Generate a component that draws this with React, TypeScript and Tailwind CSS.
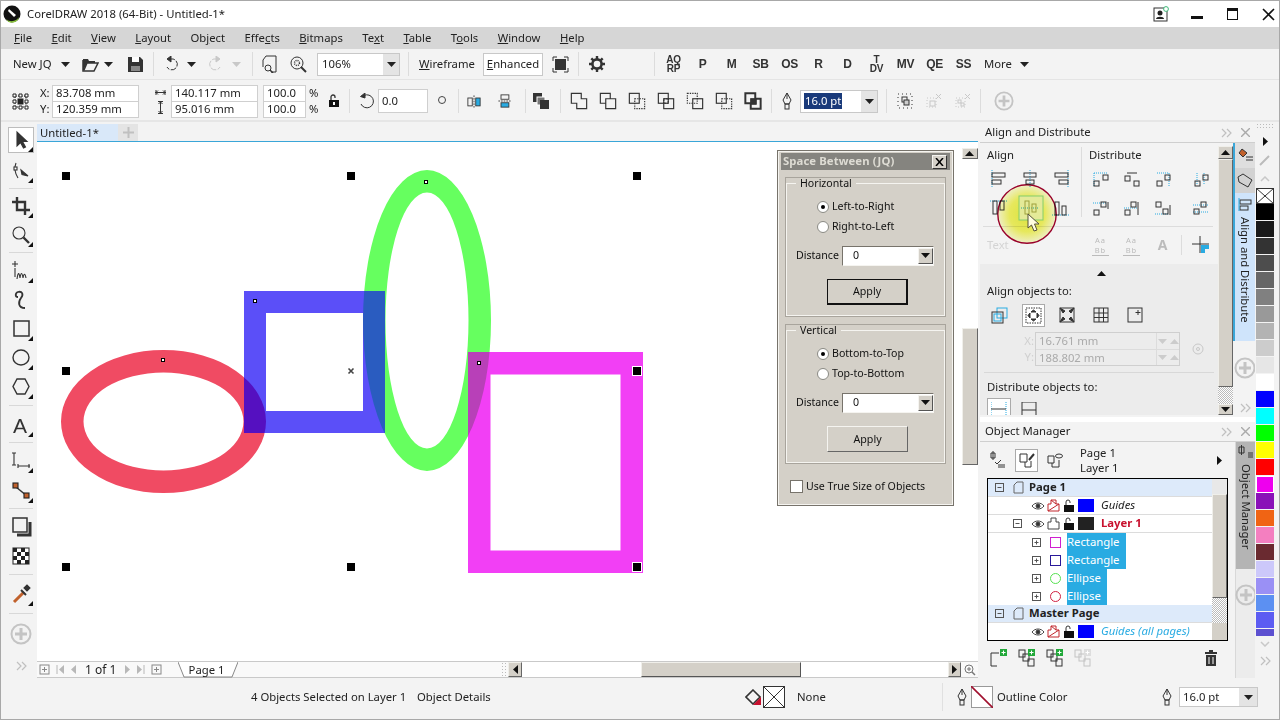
import type { ReactNode } from "react";

const ink = "#333";

function Ic({ w = 18, h = 18, vb, children, sw = 1 }: { w?: number; h?: number; vb?: string; children: ReactNode; sw?: number }) {
  return (
    <svg width={w} height={h} viewBox={vb ?? `0 0 ${w} ${h}`} fill="none" stroke={ink} strokeWidth={sw} className="shrink-0">
      {children}
    </svg>
  );
}

function Down({ c = "#222" }: { c?: string }) {
  return (
    <svg width="9" height="5" viewBox="0 0 9 5" className="shrink-0">
      <path d="M0 0H9L4.5 5Z" fill={c} />
    </svg>
  );
}

function VSep() {
  return <div className="w-px h-[24px] bg-[#dcdcdc] shrink-0" />;
}

function Plus({ size = 22 }: { size?: number }) {
  return (
    <svg width={size} height={size} viewBox="0 0 22 22" fill="none" stroke="#c4c4c4" strokeWidth="2" className="shrink-0">
      <circle cx="11" cy="11" r="9.5" />
      <path d="M11 5V17M5 11H17" strokeWidth="3" />
    </svg>
  );
}

function Chevrons({ c = "#c0c0c0" }: { c?: string }) {
  return (
    <svg width="11" height="10" viewBox="0 0 11 10" fill="none" stroke={c} strokeWidth="1.2" className="shrink-0">
      <path d="M1 1L5 5L1 9M6 1L10 5L6 9" />
    </svg>
  );
}

function Pen() {
  return (
    <svg width="10" height="18" viewBox="0 0 10 18" fill="none" stroke="#333" className="shrink-0">
      <path d="M5 1L9 8L7 12H3L1 8Z" />
      <path d="M5 1V7" />
      <rect x="3" y="12" width="4" height="5" />
    </svg>
  );
}

function Title() {
  return (
    <div className="h-[26px] flex items-center bg-white shrink-0">
      <svg width="18" height="18" viewBox="0 0 18 18" className="ml-[2px] shrink-0">
        <circle cx="9" cy="9" r="8.5" fill="#111" />
        <path d="M3 14A8.5 8.5 0 0 0 16 12A7 7 0 0 1 3 14Z" fill="#8dc63f" />
        <path d="M6 4L13 10L11 12L5 6Z" fill="#fff" />
      </svg>
      <span className="ml-[6px] text-[11.3px] text-[#222]">CorelDRAW 2018 (64-Bit) - Untitled-1*</span>
      <div className="ml-auto flex items-center">
        <svg width="16" height="16" viewBox="0 0 16 16" fill="none" className="shrink-0">
          <rect x="1" y="2" width="13" height="13" stroke="#333" />
          <circle cx="7" cy="7" r="2.5" fill="#222" />
          <path d="M3 13C3 10 11 10 11 13Z" fill="#222" />
          <circle cx="13" cy="3" r="2.4" stroke="#3cb878" fill="#fff" />
        </svg>
        <div className="ml-[22px] w-[12px] h-[3px] bg-[#111] mt-[7px]" />
        <div className="ml-[24px] w-[11px] h-[12px] border border-[#111] border-t-[3px]" />
        <svg width="13" height="13" viewBox="0 0 13 13" stroke="#111" strokeWidth="1.6" className="ml-[24px] mr-[4px] shrink-0">
          <path d="M1 1L12 12M12 1L1 12" />
        </svg>
      </div>
    </div>
  );
}

function Menu() {
  const item = "text-[11.3px] text-[#222]";
  return (
    <div className="h-[22px] bg-[#d6d6d6] flex items-center pl-[13px] gap-[19.4px] shrink-0">
      <span className={item}><u>F</u>ile</span>
      <span className={item}><u>E</u>dit</span>
      <span className={item}><u>V</u>iew</span>
      <span className={item}><u>L</u>ayout</span>
      <span className={item}>Ob<u>j</u>ect</span>
      <span className={item}>Effe<u>c</u>ts</span>
      <span className={item}><u>B</u>itmaps</span>
      <span className={item}>Te<u>x</u>t</span>
      <span className={item}><u>T</u>able</span>
      <span className={item}>T<u>o</u>ols</span>
      <span className={item}><u>W</u>indow</span>
      <span className={item}><u>H</u>elp</span>
    </div>
  );
}

function Slot({ w = "w-[18px]", ml = "", children }: { w?: string; ml?: string; children: ReactNode }) {
  return <div className={`${w} ${ml} flex justify-center items-center shrink-0`}>{children}</div>;
}

function Letter({ children }: { children: ReactNode }) {
  return (
    <div className="w-[29px] shrink-0 text-center text-[12px] font-bold text-[#333] font-['Liberation_Sans',sans-serif] leading-[10px] tracking-[-0.3px]">
      {children}
    </div>
  );
}

function Toolbar() {
  return (
    <div className="h-[31px] bg-[#f3f3f3] flex items-center pl-[12px] text-[11.3px] text-[#222] shrink-0 border-b border-[#e4e4e4]">
      <span className="w-[44px] shrink-0">New JQ</span>
      <Slot w="w-[16px]"><Down /></Slot>
      <Slot ml="ml-[8px]">
        <svg width="17" height="16" viewBox="0 0 17 16"><path d="M1 4V15H12L16 7H5L2 14" fill="none" stroke="#333" strokeWidth="1.5" /><path d="M1 3H6L7 5H13V7H5L2 13H1Z" fill="#333" /></svg>
      </Slot>
      <Slot w="w-[12px]" ml="ml-[3px]"><Down /></Slot>
      <Slot ml="ml-[12px]">
        <svg width="15" height="16" viewBox="0 0 15 16"><path d="M0 1H12L15 4V16H0Z" fill="#333" /><rect x="4" y="1" width="7" height="5" fill="#fff" /><rect x="3" y="10" width="9" height="5" fill="#888" /></svg>
      </Slot>
      <div className="ml-[9px]"><VSep /></div>
      <Slot ml="ml-[9px]">
        <Ic w={16} h={16}><path d="M5 3H9A5.5 5.5 0 1 1 3 11" strokeDasharray="6 1.5" /><path d="M7 0L3 3L7 6Z" fill={ink} /></Ic>
      </Slot>
      <Slot w="w-[12px]" ml="ml-[4px]"><Down /></Slot>
      <Slot ml="ml-[9px]">
        <svg width="16" height="16" viewBox="0 0 16 16" fill="none" stroke="#c8c8c8"><path d="M11 3H7A5.5 5.5 0 1 0 13 11" strokeDasharray="6 1.5" /><path d="M9 0L13 3L9 6Z" fill="#c8c8c8" /></svg>
      </Slot>
      <Slot w="w-[12px]" ml="ml-[6px]"><Down c="#c8c8c8" /></Slot>
      <div className="ml-[10px]"><VSep /></div>
      <Slot ml="ml-[7px]">
        <Ic w={15} h={18}><path d="M4 1H14V17H9M4 1L1 5V12" /><circle cx="6" cy="13" r="3" /><path d="M8 15L11 18" strokeWidth="1.5" /></Ic>
      </Slot>
      <Slot ml="ml-[11px]">
        <Ic w={17} h={17}><circle cx="7" cy="7" r="6" /><circle cx="7" cy="7" r="2.5" strokeDasharray="1 1" strokeWidth="1.4" /><path d="M11 11L16 16" strokeWidth="2" /></Ic>
      </Slot>
      <div className="ml-[10px] w-[83px] h-[23px] flex border border-[#c8c8c8] bg-white shrink-0">
        <span className="flex-1 pl-[4px] leading-[20px]">106%</span>
        <div className="w-[16px] bg-[#e4e4e4] flex items-center justify-center"><Down /></div>
      </div>
      <div className="ml-[8px]"><VSep /></div>
      <span className="ml-[10px] w-[56px] shrink-0 whitespace-nowrap"><u>W</u>ireframe</span>
      <span className="ml-[8px] w-[60px] h-[23px] shrink-0 border border-[#c8c8c8] bg-white text-center leading-[20px]"><u>E</u>nhanced</span>
      <Slot ml="ml-[8px]">
        <Ic w={17} h={17}><path d="M1 5V1H5M12 1H16V5M16 12V16H12M5 16H1V12" /><rect x="3" y="3" width="11" height="11" fill="#333" stroke="none" /></Ic>
      </Slot>
      <div className="ml-[9px]"><VSep /></div>
      <Slot ml="ml-[9px]">
        <svg width="16" height="16" viewBox="0 0 16 16" fill="none" stroke="#333" strokeWidth="2.6">
          <circle cx="8" cy="8" r="4.6" />
          <path d="M8 0V3M8 13V16M0 8H3M13 8H16M2.3 2.3L4.4 4.4M11.6 11.6L13.7 13.7M2.3 13.7L4.4 11.6M11.6 4.4L13.7 2.3" strokeWidth="2.4" />
        </svg>
      </Slot>
      <div className="ml-[48px]"><VSep /></div>
      <div className="ml-[4px] flex items-center">
        <Letter><div className="text-[10px] leading-[9px]">AQ</div><div className="text-[10px] leading-[9px]">RP</div></Letter>
        <Letter>P</Letter>
        <Letter>M</Letter>
        <Letter>SB</Letter>
        <Letter>OS</Letter>
        <Letter>R</Letter>
        <Letter>D</Letter>
        <Letter><div className="text-[10px] leading-[9px]">T</div><div className="text-[10px] leading-[9px]">DV</div></Letter>
        <Letter>MV</Letter>
        <Letter>QE</Letter>
        <Letter>SS</Letter>
      </div>
      <span className="ml-[6px] w-[30px] shrink-0">More</span>
      <Slot w="w-[12px]" ml="ml-[4px]"><Down /></Slot>
    </div>
  );
}

function Field({ w, text, h = "h-[17px]", extra = "" }: { w: string; text: string; h?: string; extra?: string }) {
  return (
    <div className={`${w} ${h} ${extra} border border-[#cfcfcf] bg-white pl-[3px] flex items-center text-[11.3px] text-[#222] leading-none whitespace-nowrap`}>
      {text}
    </div>
  );
}

function Shape({ n }: { n: number }) {
  const a = <rect x="1.5" y="1.5" width="11" height="11" />;
  const b = <rect x="7.5" y="7.5" width="11" height="11" />;
  const da = <rect x="1.5" y="1.5" width="11" height="11" strokeDasharray="1.5 1.2" />;
  const db = <rect x="7.5" y="7.5" width="11" height="11" strokeDasharray="1.5 1.2" />;
  return (
    <svg width="18" height="18" viewBox="0 0 20 20" fill="none" stroke="#333" strokeWidth="1.3">
      {n === 0 && <path d="M1.5 1.5H12.5V7.5H18.5V18.5H7.5V12.5H1.5Z" />}
      {n === 1 && <path d="M1.5 1.5H12.5V7.5H7.5V12.5H1.5ZM7.5 7.5H18.5V18.5H7.5Z" />}
      {n === 2 && <>{a}{db}</>}
      {n === 3 && <>{a}{b}<rect x="7.5" y="7.5" width="5" height="5" strokeDasharray="1.5 1" /></>}
      {n === 4 && <>{da}{b}</>}
      {n === 5 && <>{a}{db}</>}
      {n === 6 && <><path d="M1.5 1.5H12.5V12.5H1.5Z M7.5 12.5V18.5H18.5V7.5H12.5" strokeWidth="2.2" /><rect x="7.5" y="7.5" width="6" height="6" fill="#333" /></>}
    </svg>
  );
}

function PropBar() {
  return (
    <div className="h-[42px] bg-[#f3f3f3] flex items-center pl-[11px] text-[11.3px] text-[#222] shrink-0 border-b-[2px] border-[#e6e6e6] pt-[2px]">
      <svg width="17" height="17" viewBox="0 0 17 17" fill="none" stroke="#222" className="shrink-0">
        <rect x="3" y="3" width="11" height="11" strokeDasharray="1.5 1.5" />
        <rect x="6" y="6" width="5" height="5" fill="#222" />
        <path d="M1 1h3v3h-3zM7 1h3v3h-3zM13 1h3v3h-3zM1 7h3v3h-3zM13 7h3v3h-3zM1 13h3v3h-3zM7 13h3v3h-3zM13 13h3v3h-3z" fill="#fff" />
      </svg>
      <div className="ml-[11px] w-[12px] flex flex-col shrink-0 leading-[16px]"><span>X:</span><span>Y:</span></div>
      <div className="w-[87px] flex flex-col shrink-0">
        <Field w="w-full" text="83.708 mm" />
        <Field w="w-full" text="120.359 mm" extra="-mt-px" />
      </div>
      <div className="ml-[16px] w-[11px] flex flex-col items-center gap-[5px] shrink-0">
        <Ic w={11} h={7}><path d="M0 3.5H11M1 1V6M10 1V6M3 1.5L1 3.5L3 5.5M8 1.5L10 3.5L8 5.5" /></Ic>
        <Ic w={7} h={13}><path d="M3.5 0V13M1 0.5H6M1 12.5H6" /><path d="M1.5 3L3.5 1L5.5 3M1.5 10L3.5 12L5.5 10" /></Ic>
      </div>
      <div className="ml-[5px] w-[87px] flex flex-col shrink-0">
        <Field w="w-full" text="140.117 mm" />
        <Field w="w-full" text="95.016 mm" extra="-mt-px" />
      </div>
      <div className="ml-[5px] w-[43px] flex flex-col shrink-0">
        <Field w="w-full" text="100.0" />
        <Field w="w-full" text="100.0" extra="-mt-px" />
      </div>
      <div className="ml-[3px] w-[10px] flex flex-col shrink-0 leading-[16px]"><span>%</span><span>%</span></div>
      <Slot w="w-[12px]" ml="ml-[9px]">
        <svg width="10" height="14" viewBox="0 0 10 14"><path d="M2 6V3A2 2 0 0 1 6 3V4" fill="none" stroke="#333" strokeWidth="1.3" /><rect x="0" y="6" width="10" height="7" fill="#111" /><rect x="4" y="8" width="2" height="3" fill="#fff" /></svg>
      </Slot>
      <div className="ml-[9px]"><VSep /></div>
      <Slot w="w-[16px]" ml="ml-[9px]">
        <Ic w={16} h={16}><path d="M5 2.5A6.5 6.5 0 1 1 2 11" /><path d="M6 0L1.5 3.5L6 5Z" fill={ink} /></Ic>
      </Slot>
      <Field w="w-[50px] ml-[3px] shrink-0" h="h-[24px]" text="0.0" />
      <Slot w="w-[10px]" ml="ml-[9px]">
        <div className="w-[8px] h-[8px] rounded-full border border-[#444] -mt-[2px]" />
      </Slot>
      <div className="ml-[11px]"><VSep /></div>
      <Slot w="w-[30px]">
        <svg width="14" height="13" viewBox="0 0 16 14" fill="none" stroke="#333"><rect x="1" y="3" width="5" height="9" /><rect x="10" y="3" width="5" height="9" fill="#29abe2" stroke="#333" /><path d="M8 0V14" strokeDasharray="2 1" /></svg>
      </Slot>
      <Slot w="w-[30px]">
        <svg width="13" height="14" viewBox="0 0 14 16" fill="none" stroke="#333"><rect x="3" y="1" width="9" height="5" /><rect x="3" y="10" width="9" height="5" fill="#29abe2" stroke="#333" /><path d="M0 8H14" strokeDasharray="2 1" /></svg>
      </Slot>
      <div className="ml-[6px]"><VSep /></div>
      <Slot w="w-[30px]">
        <svg width="16" height="16" viewBox="0 0 16 16"><rect x="0" y="0" width="9" height="9" fill="#333" /><rect x="4" y="4" width="8" height="8" fill="#777" stroke="#fff" /><rect x="7" y="7" width="9" height="9" fill="#333" /></svg>
      </Slot>
      <div className="ml-[4px]"><VSep /></div>
      <div className="ml-[3px] flex items-center shrink-0">
        {[0, 1, 2, 3, 4, 5, 6].map((n) => (
          <Slot key={n} w="w-[29px]"><Shape n={n} /></Slot>
        ))}
      </div>
      <div className="ml-[4px]"><VSep /></div>
      <Slot w="w-[24px]" ml="ml-[3px]"><Pen /></Slot>
      <div className="ml-[1px] w-[78px] h-[23px] flex border border-[#c8c8c8] bg-white shrink-0">
        <div className="flex-1 pl-[3px] flex items-center">
          <span className="bg-[#1a3a7a] text-white px-px leading-[16px]">16.0 pt</span>
        </div>
        <div className="w-[16px] bg-[#e4e4e4] flex items-center justify-center"><Down /></div>
      </div>
      <div className="ml-[8px]"><VSep /></div>
      <Slot w="w-[29px]" ml="ml-[3px]">
        <svg width="16" height="16" viewBox="0 0 16 16" fill="none" stroke="#333"><rect x="1" y="1" width="14" height="14" strokeDasharray="1 3" /><rect x="5" y="4" width="5" height="5" /><rect x="7" y="7" width="5" height="5" fill="#ccc" /></svg>
      </Slot>
      <Slot w="w-[29px]">
        <svg width="16" height="16" viewBox="0 0 16 16" fill="none" stroke="#c8c8c8"><rect x="1" y="5" width="9" height="9" strokeDasharray="1 2" /><rect x="4" y="8" width="5" height="5" /><path d="M10 1L15 6M15 1L10 6" /></svg>
      </Slot>
      <Slot w="w-[29px]">
        <svg width="16" height="16" viewBox="0 0 16 16" fill="none" stroke="#c8c8c8"><rect x="1" y="5" width="9" height="9" strokeDasharray="1 2" /><rect x="3" y="7" width="3" height="3" /><rect x="6" y="10" width="3" height="3" /><path d="M10 1L15 6M15 1L10 6" /></svg>
      </Slot>
      <div className="ml-[3px]"><VSep /></div>
      <Slot w="w-[24px]" ml="ml-[11px]"><Plus size={20} /></Slot>
    </div>
  );
}

function Fly() {
  return <path d="M24 19V24H19Z" fill="#111" stroke="none" />;
}

function Tool({ children, active, fly = true }: { children: ReactNode; active?: boolean; fly?: boolean }) {
  return (
    <div className="h-[29px] flex items-center justify-center">
      <div className={`w-[24px] h-[24px] ${active ? "bg-white outline outline-[#bdbdbd]" : ""}`}>
        <svg width="24" height="24" viewBox="0 0 24 24" fill="none" stroke="#333" strokeWidth="1.1">
          {children}
          {fly && <Fly />}
        </svg>
      </div>
    </div>
  );
}

function ToolSep({ h }: { h: string }) {
  return (
    <div className={`${h} flex items-center justify-center`}>
      <div className="w-[24px] h-px bg-[#d8d8d8]" />
    </div>
  );
}

function Toolbox() {
  return (
    <div className="w-[36px] shrink-0 bg-[#f3f3f3] flex flex-col pt-[3px] pl-[4px] relative">
      <Tool active><path d="M8 4V18L11.5 14.5L14.5 20L16.5 19L13.5 13.5H18Z" fill="#333" /></Tool>
      <div className="h-[2px]" />
      <Tool><path d="M7 4Q4 11 9 19" /><rect x="5" y="8" width="3" height="3" fill="#fff" /><path d="M12 11L19 17L13 15.5Z" fill="#333" /></Tool>
      <ToolSep h="h-[6px]" />
      <Tool><path d="M8 3V16H21M3 8H16V21" strokeWidth="2.4" /></Tool>
      <Tool><circle cx="10" cy="10" r="6" /><path d="M14.5 14.5L20 20" strokeWidth="2.4" /></Tool>
      <ToolSep h="h-[7px]" />
      <Tool><path d="M6 2V8M3 5H9M6 9V18" /><path d="M8 20C9 13 10 13 11 19C12 13 13 13 14 19C15 14 16 14 17 19" /></Tool>
      <Tool fly={false}><path d="M16 20C9 20 9 14 12 10C15 6 13 3 9 4C6 5 6 9 9 9" strokeWidth="1.8" /></Tool>
      <Tool><rect x="5" y="4" width="15" height="15" strokeWidth="1.5" /></Tool>
      <Tool><ellipse cx="12" cy="11.5" rx="8" ry="7.5" strokeWidth="1.4" /></Tool>
      <Tool><path d="M8 4H16L20 11.5L16 19H8L4 11.5Z" strokeWidth="1.4" /></Tool>
      <ToolSep h="h-[9px]" />
      <Tool>
        <text x="4" y="20" fontSize="21" stroke="none" fill="#333" fontFamily="Liberation Sans, sans-serif">A</text>
      </Tool>
      <ToolSep h="h-[7px]" />
      <Tool><path d="M5 4V16M3 4H7M3 16H7M9 17H21" /><path d="M9 15L9 19M20 15L20 19" /></Tool>
      <div className="h-px" />
      <Tool><path d="M7 8L18 17" strokeWidth="1.5" /><rect x="4" y="4" width="5" height="5" fill="#c1612c" stroke="#222" /><rect x="15" y="14" width="5" height="5" fill="#c1612c" stroke="#222" /></Tool>
      <ToolSep h="h-[7px]" />
      <Tool fly={false}><rect x="4" y="3" width="14" height="14" strokeWidth="1.5" /><path d="M21 7V20H8" strokeWidth="3" /></Tool>
      <Tool fly={false}>
        <rect x="4" y="4" width="16" height="16" fill="#fff" stroke="#333" />
        <path d="M4 4h4v4h-4zM12 4h4v4h-4zM8 8h4v4h-4zM16 8h4v4h-4zM4 12h4v4h-4zM12 12h4v4h-4zM8 16h4v4h-4zM16 16h4v4h-4z" fill="#222" stroke="none" />
      </Tool>
      <ToolSep h="h-[9px]" />
      <Tool><path d="M5 20L15 10" stroke="#c1612c" strokeWidth="3" /><path d="M12 8L17 13" strokeWidth="2" /><path d="M15 6L18 3L21 6L18 9Z" fill="#333" /></Tool>
      <ToolSep h="h-[11px]" />
      <div className="h-[29px] flex items-center justify-center"><Plus /></div>
      <div className="absolute bottom-[7px] left-[15px]"><Chevrons /></div>
    </div>
  );
}

const ring = (cx: number, cy: number, rx: number, ry: number, t: number) => {
  const e = (a: number, b: number) => `M${cx - a} ${cy}a${a} ${b} 0 1 0 ${2 * a} 0a${a} ${b} 0 1 0 ${-2 * a} 0Z`;
  return e(rx, ry) + e(rx - t, ry - t);
};
const band = (x0: number, y0: number, x1: number, y1: number, t: number) =>
  `M${x0} ${y0}H${x1}V${y1}H${x0}ZM${x0 + t} ${y0 + t}H${x1 - t}V${y1 - t}H${x0 + t}Z`;

const redRing = ring(163.5, 421.5, 102.5, 71.5, 22.5);
const greenRing = ring(427, 320.5, 64, 150.5, 22.5);
const blueBand = band(244, 291, 385, 433, 22);
const pinkBand = band(468, 352, 643, 573, 22.5);

function Drawing() {
  const handles: [number, number][] = [[66, 176], [351, 176], [637, 176], [66, 371], [66, 567], [351, 567]];
  const nodes: [number, number][] = [[163, 360], [255, 301], [426, 182], [479, 363]];
  return (
    <svg width="924" height="518" viewBox="37 142 924 518" className="block">
      <defs>
        <clipPath id="clip-red"><path d={redRing} clipRule="evenodd" /></clipPath>
        <clipPath id="clip-green"><path d={greenRing} clipRule="evenodd" /></clipPath>
      </defs>
      <path d={redRing} fill="#f04b63" fillRule="evenodd" />
      <path d={greenRing} fill="#66ff5f" fillRule="evenodd" />
      <path d={blueBand} fill="#5b4ff8" fillRule="evenodd" />
      <path d={pinkBand} fill="#f23ff5" fillRule="evenodd" />
      <path d={blueBand} fill="#5510c0" fillRule="evenodd" clipPath="url(#clip-red)" />
      <path d={blueBand} fill="#2a5cc0" fillRule="evenodd" clipPath="url(#clip-green)" />
      <path d={pinkBand} fill="#b840b8" fillRule="evenodd" clipPath="url(#clip-green)" />
      {handles.map(([x, y]) => (
        <rect key={`${x}-${y}`} x={x - 4} y={y - 4} width="8" height="8" fill="#000" />
      ))}
      <rect x="632.5" y="366.5" width="9" height="9" fill="#000" stroke="#fff" />
      <rect x="632.5" y="562.5" width="9" height="9" fill="#000" stroke="#fff" />
      {nodes.map(([x, y]) => (
        <rect key={`${x}-${y}`} x={x - 1.5} y={y - 1.5} width="3" height="3" fill="#fff" stroke="#000" />
      ))}
      <path d="M348.5 368.5L353.5 373.5M353.5 368.5L348.5 373.5" stroke="#444" strokeWidth="1.6" />
    </svg>
  );
}

function Radio({ on, label }: { on?: boolean; label: string }) {
  return (
    <div className="h-[20px] flex items-center pl-[30px]">
      <div className="w-[12px] h-[12px] rounded-full bg-white border border-[#8a8a84] flex items-center justify-center shrink-0">
        {on && <div className="w-[4px] h-[4px] rounded-full bg-black" />}
      </div>
      <span className="ml-[3px]">{label}</span>
    </div>
  );
}

function Group({ title, a, b, def }: { title: string; a: string; b: string; def?: boolean }) {
  return (
    <fieldset className="border border-[#f5f4f0] outline outline-[#a8a49c] mx-[7px] h-[138px] px-0">
      <legend className="ml-[9px] px-[4px] leading-none">{title}</legend>
      <div className="mt-[8px]">
        <Radio on label={a} />
        <Radio label={b} />
      </div>
      <div className="mt-[9px] flex items-center pl-[9px]">
        <span className="w-[46px]">Distance</span>
        <div className="w-[92px] h-[20px] bg-white border border-t-[#77736b] border-l-[#77736b] border-r-[#f5f4f0] border-b-[#f5f4f0] flex items-center pl-[10px]">
          <span className="flex-1">0</span>
          <div className="w-[15px] h-[16px] bg-[#d4d0c8] border border-[#f5f4f0] border-r-[#555] border-b-[#555] flex items-center justify-center"><Down c="#111" /></div>
        </div>
      </div>
      <div className="mt-[13px] flex justify-center pl-[4px]">
        <button className={`w-[81px] h-[26px] bg-[#d4d0c8] border ${def ? "border-[#111] border-b-[2px] border-r-[2px]" : "border-[#f5f4f0] border-r-[#666] border-b-[#666]"} text-[10.7px]`}>
          Apply
        </button>
      </div>
    </fieldset>
  );
}

function SpaceDialog() {
  return (
    <div className="absolute left-[741px] top-[9px] w-[175px] h-[354px] bg-[#d4d0c8] border border-[#f5f4f0] outline outline-[#77736b] text-[10.6px] text-[#111] font-['Noto_Sans',sans-serif]">
      <div className="mx-[2px] mt-px h-[17px] bg-[#85847f] flex items-center pl-[2px]">
        <span className="font-bold text-[#dedcd4] text-[11.3px] tracking-[0.1px]">Space Between (JQ)</span>
        <div className="ml-auto mr-[3px] w-[15px] h-[14px] bg-[#d4d0c8] border border-[#f5f4f0] border-r-[#333] border-b-[#333] flex items-center justify-center">
          <svg width="9" height="8" viewBox="0 0 9 8" stroke="#000" strokeWidth="1.5"><path d="M1 0L8 8M8 0L1 8" /></svg>
        </div>
      </div>
      <div className="mt-[8px]">
        <Group title="Horizontal" a="Left-to-Right" b="Right-to-Left" def />
      </div>
      <div className="mt-[9px]">
        <Group title="Vertical" a="Bottom-to-Top" b="Top-to-Bottom" />
      </div>
      <div className="mt-[16px] ml-[11px] flex items-center">
        <div className="w-[13px] h-[13px] bg-white border border-[#77736b]" />
        <span className="ml-[3px]">Use True Size of Objects</span>
      </div>
    </div>
  );
}

function Btn({ children, cls = "w-[16px] h-[11px]" }: { children: ReactNode; cls?: string }) {
  return (
    <div className={`${cls} bg-[#d4d0c8] border border-[#f0efea] border-r-[#666] border-b-[#666] flex items-center justify-center shrink-0`}>
      {children}
    </div>
  );
}

function Arrow({ dir, c = "#111" }: { dir: "up" | "down" | "left" | "right"; c?: string }) {
  const d = { up: "M0 5H9L4.5 0Z", down: "M0 0H9L4.5 5Z", left: "M5 0V9L0 4.5Z", right: "M0 0V9L5 4.5Z" }[dir];
  const box = dir === "up" || dir === "down" ? "0 0 9 5" : "0 0 5 9";
  const w = dir === "up" || dir === "down" ? 9 : 5;
  const h = dir === "up" || dir === "down" ? 5 : 9;
  return (
    <svg width={w} height={h} viewBox={box} className="shrink-0">
      <path d={d} fill={c} />
    </svg>
  );
}

function NavBar() {
  const g = "#b8b8b8";
  return (
    <div className="h-[17px] flex items-center bg-[#f9f9f9] border-t border-b border-[#c9c9c9] shrink-0 text-[12px] text-[#222]">
      <div className="w-[139px] flex items-center pl-[2px] shrink-0">
        <svg width="11" height="11" viewBox="0 0 11 11" fill="none" stroke="#888" className="shrink-0"><rect x="1" y="1" width="9" height="9" /><path d="M5.5 3V8M3 5.5H8" /></svg>
        <svg width="8" height="9" viewBox="0 0 8 9" className="ml-[6px] shrink-0"><path d="M1 0V9" stroke={g} /><path d="M8 0V9L3 4.5Z" fill={g} /></svg>
        <div className="ml-[7px] flex"><Arrow dir="left" c={g} /></div>
        <span className="ml-[9px] w-[33px] whitespace-nowrap shrink-0">1 of 1</span>
        <div className="ml-[7px] flex"><Arrow dir="right" c={g} /></div>
        <svg width="8" height="9" viewBox="0 0 8 9" className="ml-[7px] shrink-0"><path d="M7 0V9" stroke={g} /><path d="M0 0V9L5 4.5Z" fill={g} /></svg>
        <svg width="11" height="11" viewBox="0 0 11 11" fill="none" stroke="#888" className="ml-[6px] shrink-0"><rect x="1" y="1" width="9" height="9" /><path d="M5.5 3V8M3 5.5H8" /></svg>
      </div>
      <div className="relative w-[60px] h-[15px] ml-[2px] pr-[3px] text-center text-[11.3px] shrink-0 leading-[15px]">
        <svg width="60" height="16" viewBox="0 0 60 16" className="absolute inset-0">
          <path d="M0 0L6 15H54L60 0" fill="#fff" stroke="#888" />
        </svg>
        <span className="relative">Page 1</span>
      </div>
      <div className="flex-1" />
      <div className="w-[6px] h-full mr-px bg-[radial-gradient(#bbb_1px,transparent_1px)] bg-[length:3px_3px]" />
      <Btn cls="w-[14px] h-[15px]"><Arrow dir="left" /></Btn>
      <div className="w-[119px] h-full bg-white shrink-0" />
      <div className="w-[160px] h-[15px] bg-[#d4d0c8] border border-[#f0efea] border-r-[#555] border-b-[#555] shrink-0" />
      <div className="w-[147px] h-full bg-white shrink-0" />
      <Btn cls="w-[13px] h-[15px]"><Arrow dir="right" /></Btn>
      <div className="w-[17px] flex justify-center shrink-0">
        <svg width="12" height="12" viewBox="0 0 12 12" fill="none" stroke="#777"><circle cx="5" cy="5" r="4" /><path d="M8 8L11 11" strokeWidth="1.5" /><path d="M3 5H7M5 3V7" /></svg>
      </div>
    </div>
  );
}

function Document() {
  return (
    <div className="flex-1 min-w-0 flex flex-col">
      <div className="h-[20px] flex items-end bg-[#f3f3f3] shrink-0 border-b border-[#3aa6d8]">
        <div className="w-[81px] h-[17px] bg-[#d9e8f9] text-[11.3px] text-[#222] pl-[3px] leading-[17px]">Untitled-1*</div>
        <div className="w-[20px] h-[17px] bg-[#e4e4e4] flex items-center justify-center">
          <svg width="11" height="11" viewBox="0 0 11 11" stroke="#c0c0c0" strokeWidth="2"><path d="M5.5 0V11M0 5.5H11" /></svg>
        </div>
      </div>
      <div className="flex-1 min-h-0 flex">
        <div className="relative w-[924px] bg-white overflow-hidden shrink-0">
          <Drawing />
          <SpaceDialog />
        </div>
        <div className="flex-1 bg-white flex flex-col items-center pt-[6px]">
          <Btn><Arrow dir="up" /></Btn>
          <div className="mt-[169px] w-[16px] h-[137px] bg-[#d4d0c8] border border-[#f0efea] border-r-[#666] border-b-[#666]" />
        </div>
      </div>
      <NavBar />
    </div>
  );
}

function Al({ children, dim }: { children: ReactNode; dim?: boolean }) {
  return (
    <div className="w-[31px] flex justify-center shrink-0">
      <svg width="18" height="18" viewBox="0 0 18 18" fill="none" stroke={dim ? "#a8a860" : "#333"}>{children}</svg>
    </div>
  );
}

const Dot = ({ d }: { d: string }) => <path d={d} stroke="#29abe2" strokeDasharray="1 1" />;

function AlignPanel() {
  return (
    <div className="flex-1 min-w-0 h-[272px] overflow-hidden relative text-[11.3px] text-[#222]">
      <div className="h-[121px] bg-[#f3f3f3] pl-[3px] pr-[5px]">
        <div className="flex h-[79px] pt-[4px]">
          <div className="w-[98px] shrink-0">
            <div className="h-[17px] pl-[4px] leading-[16px]">Align</div>
            <div className="flex h-[29px] items-center">
              <Al><Dot d="M2 0V18" /><rect x="2" y="3" width="13" height="4" /><rect x="2" y="10" width="9" height="4" /></Al>
              <Al><Dot d="M9 0V18" /><rect x="3" y="3" width="12" height="4" /><rect x="5" y="10" width="8" height="4" /></Al>
              <Al><Dot d="M16 0V18" /><rect x="3" y="3" width="13" height="4" /><rect x="7" y="10" width="9" height="4" /></Al>
            </div>
            <div className="flex h-[29px] items-center">
              <Al><Dot d="M0 2H18" /><rect x="3" y="2" width="4" height="13" /><rect x="10" y="2" width="4" height="9" /></Al>
              <Al dim><Dot d="M0 9H18" /><rect x="4" y="2" width="4" height="13" /><rect x="11" y="5" width="4" height="8" /></Al>
              <Al><Dot d="M0 16H18" /><rect x="3" y="3" width="4" height="13" /><rect x="10" y="7" width="4" height="9" /></Al>
            </div>
          </div>
          <div className="w-px h-[70px] bg-[#dcdcdc] shrink-0" />
          <div className="flex-1 pl-[3px]">
            <div className="h-[17px] pl-[4px] leading-[16px]">Distribute</div>
            <div className="flex h-[29px] items-center">
              <Al><Dot d="M2 3H15" /><path d="M2 3V16" stroke="#29abe2" strokeDasharray="1 1" /><rect x="2" y="11" width="5" height="5" /><rect x="11" y="5" width="5" height="5" /></Al>
              <Al><path d="M4 3H14" /><rect x="2" y="6" width="5" height="5" /><rect x="11" y="11" width="5" height="5" /></Al>
              <Al><Dot d="M3 3H15V16" /><rect x="3" y="11" width="5" height="5" /><rect x="11" y="5" width="5" height="5" /></Al>
              <div className="ml-[7px] shrink-0"><Al><path d="M5 3V14M12 3V14" strokeDasharray="1 1" stroke="#29abe2" /><rect x="3" y="11" width="5" height="5" /><rect x="11" y="5" width="5" height="5" /></Al></div>
            </div>
            <div className="flex h-[29px] items-center">
              <Al><Dot d="M1 4H15" /><rect x="2" y="11" width="5" height="5" /><rect x="9" y="3" width="5" height="5" /><path d="M16 3V10" /></Al>
              <Al><Dot d="M1 9H15" /><rect x="2" y="11" width="5" height="5" /><rect x="8" y="3" width="5" height="5" /><path d="M15 3V16" /></Al>
              <Al><Dot d="M1 15H15" /><rect x="2" y="3" width="5" height="5" /><rect x="9" y="10" width="5" height="5" /><path d="M16 6V16" /></Al>
              <div className="ml-[7px] shrink-0"><Al><Dot d="M1 6H16M1 13H16" /><rect x="2" y="10" width="5" height="5" /><rect x="9" y="3" width="5" height="5" /></Al></div>
            </div>
          </div>
        </div>
        <div className="mt-[4px] h-px bg-[#dcdcdc]" />
        <div className="mt-[5px] h-[26px] flex items-center">
          <span className="w-[98px] pl-[4px] text-[#d4d4d4] shrink-0">Text</span>
          <div className="pl-[4px] flex items-center">
            {["Aa", "Aa"].map((t, i) => (
              <div key={i} className="w-[31px] text-center text-[#bbb] text-[7.5px] leading-[10px] tracking-[1px]">
                <div>{t}</div>
                <div className="border-b border-[#bbb] mx-[7px]">Bb</div>
              </div>
            ))}
            <div className="w-[31px] text-center text-[#bbb] font-bold text-[14px] leading-none">A</div>
            <div className="w-px h-[20px] bg-[#dcdcdc] ml-[3px]" />
            <svg width="18" height="18" viewBox="0 0 18 18" className="ml-[10px] shrink-0">
              <path d="M0 8H17M8 0V17" stroke="#333" />
              <path d="M9 9H17V13H13V17H9Z" fill="#29abe2" />
            </svg>
          </div>
        </div>
      </div>
      <div className="h-[151px] bg-[#ececec]">
        <div className="h-[18px] flex items-center pl-[117px]"><Arrow dir="up" /></div>
        <div className="h-[18px] pl-[7px] leading-[18px]">Align objects to:</div>
        <div className="mt-[3px] h-[24px] flex items-center pl-[2px]">
          <div className="w-[34px] flex justify-center">
            <svg width="17" height="17" viewBox="0 0 17 17" fill="none"><rect x="6" y="1" width="10" height="10" stroke="#29abe2" /><rect x="1" y="5" width="11" height="11" stroke="#333" /><rect x="3" y="7" width="7" height="7" stroke="#29abe2" /></svg>
          </div>
          <div className="w-[34px] flex justify-center">
            <div className="w-[23px] h-[23px] bg-white border border-[#aaa] flex items-center justify-center">
              <svg width="17" height="17" viewBox="0 0 17 17" fill="none" stroke="#333"><rect x="1" y="1" width="15" height="15" strokeDasharray="1.5 1" /><path d="M6 5L8.5 3L11 5ZM6 12L8.5 14L11 12ZM5 6L3 8.5L5 11ZM12 6L14 8.5L12 11Z" fill="#333" /></svg>
            </div>
          </div>
          <div className="w-[34px] flex justify-center">
            <svg width="16" height="16" viewBox="0 0 16 16" fill="none" stroke="#333"><rect x="1" y="1" width="14" height="14" /><path d="M1 1L6 4L4 6ZM15 1L10 4L12 6ZM1 15L6 12L4 10ZM15 15L10 12L12 10Z" fill="#333" /></svg>
          </div>
          <div className="w-[34px] flex justify-center">
            <svg width="16" height="16" viewBox="0 0 16 16" fill="none" stroke="#333"><rect x="1" y="1" width="14" height="14" /><path d="M6 1V15M10.5 1V15M1 6H15M1 10.5H15" /></svg>
          </div>
          <div className="w-[34px] flex justify-center">
            <svg width="16" height="16" viewBox="0 0 16 16" fill="none" stroke="#333"><rect x="1" y="1" width="14" height="14" /><path d="M11 3V8M8.5 5.5H13.5" /></svg>
          </div>
        </div>
        <div className="mt-[5px] flex items-center text-[#aaa]">
          <div className="w-[55px] shrink-0 text-right pr-[1px] leading-[16px] text-[#d0d0d0]">
            <div>X:</div>
            <div>Y:</div>
          </div>
          <div className="w-[145px] shrink-0 border border-[#cfcfcf]">
            {["16.761 mm", "188.802 mm"].map((t, i) => (
              <div key={t} className={`h-[16px] flex ${i ? "border-t border-[#dcdcdc]" : ""}`}>
                <span className="flex-1 pl-[3px] leading-[15px]">{t}</span>
                <div className="w-[23px] border-l border-[#dcdcdc] flex items-center justify-center gap-[3px]">
                  <Arrow dir="down" c="#ccc" />
                  <Arrow dir="up" c="#ccc" />
                </div>
              </div>
            ))}
          </div>
          <svg width="12" height="12" viewBox="0 0 12 12" fill="none" stroke="#c8c8c8" className="ml-[12px] shrink-0"><circle cx="6" cy="6" r="5" /><circle cx="6" cy="6" r="1.5" /></svg>
        </div>
        <div className="mx-[4px] mt-[6px] h-px bg-[#d8d8d8]" />
        <div className="mt-[6px] h-[16px] pl-[7px] leading-[16px]">Distribute objects to:</div>
        <div className="mt-[3px] flex items-start pl-[7px] gap-[10px]">
          <div className="w-[24px] h-[24px] bg-white border border-[#aaa] flex justify-center pt-[3px]">
            <svg width="16" height="16" viewBox="0 0 16 16" fill="none"><path d="M0 0V14M15 0V14" stroke="#29abe2" strokeDasharray="1 1" /><path d="M0 7H15" stroke="#333" /></svg>
          </div>
          <svg width="16" height="16" viewBox="0 0 16 16" fill="none" stroke="#333" className="mt-[4px] shrink-0"><path d="M1 0V16M15 0V16M1 8H15" /><path d="M1 0H15" /></svg>
        </div>
      </div>
      <svg width="60" height="60" viewBox="0 0 60 60" className="absolute left-[17px] top-[41px] mix-blend-multiply">
        <defs>
          <radialGradient id="glow">
            <stop offset="0" stopColor="#e8ee40" />
            <stop offset="0.6" stopColor="#f2f460" />
            <stop offset="1" stopColor="#fafad0" />
          </radialGradient>
        </defs>
        <circle cx="30" cy="30" r="29.2" fill="url(#glow)" stroke="#a0002c" strokeWidth="1.4" />
        <rect x="22" y="12" width="24" height="24" fill="#f0f6a0" stroke="#8ad870" />
      </svg>
      <svg width="14" height="20" viewBox="0 0 14 20" className="absolute left-[47px] top-[70px]">
        <path d="M1 1V15L4.5 12L7 18L10 17L7.5 11L12 11Z" fill="#fffde0" stroke="#55503a" />
      </svg>
    </div>
  );
}

function Scrollbar({ children }: { children: ReactNode }) {
  return <div className="flex flex-col items-center shrink-0 w-[15px] bg-[#f3f3f3]">{children}</div>;
}

function Dither({ h }: { h: string }) {
  return <div className={`${h} w-full bg-[repeating-conic-gradient(#bbb_0_25%,#fff_0_50%)] bg-[length:2px_2px]`} />;
}

function DockHeader({ title }: { title: string }) {
  return (
    <div className="h-[20px] flex items-center pl-[5px] border-b border-[#cfcfcf] bg-[#f3f3f3] text-[11.3px] text-[#222] shrink-0">
      <span>{title}</span>
      <div className="ml-auto flex items-center gap-[9px] mr-[5px]">
        <Chevrons />
        <svg width="9" height="9" viewBox="0 0 9 9" stroke="#aaa" strokeWidth="1.4"><path d="M0 0L9 9M9 0L0 9" /></svg>
      </div>
    </div>
  );
}

function TopDocker() {
  return (
    <div className="h-[295px] flex flex-col shrink-0 pt-[2px]">
      <div className="-mt-px"><DockHeader title="Align and Distribute" /></div>
      <div className="flex">
        <AlignPanel />
        <Scrollbar>
          <div className="h-[3px]" />
          <Btn cls="w-[15px] h-[13px]"><Arrow dir="up" /></Btn>
          <div className="w-[15px] h-[228px] bg-[#d4d0c8] border border-[#f0efea] border-r-[#666] border-b-[#666]" />
          <Dither h="h-[17px]" />
          <Btn cls="w-[15px] h-[11px]"><Arrow dir="down" /></Btn>
        </Scrollbar>
        <div className="w-[2px] h-[198px] bg-[#3aa6d8] shrink-0" />
        <div className="w-[20px] h-[272px] shrink-0 flex flex-col items-center bg-[#f3f3f3]">
          <div className="w-full h-[25px] bg-[#dedede] flex items-center justify-center">
            <svg width="15" height="15" viewBox="0 0 15 15" fill="none" stroke="#333"><path d="M4 1L9 5L5 9L1 5Z" fill="#c1612c" /><path d="M8 9H15M8 12H15" /></svg>
          </div>
          <div className="w-full h-[25px] bg-[#d2d2d2] flex items-center justify-center">
            <svg width="16" height="15" viewBox="0 0 16 15" fill="none" stroke="#333"><path d="M1 4L6 1L15 7L11 14L2 9Z" /></svg>
          </div>
          <div className="w-full h-[148px] bg-[#cfe4fb] flex flex-col items-center pt-[5px]">
            <svg width="14" height="13" viewBox="0 0 14 13" fill="none" stroke="#333"><rect x="2" y="2" width="11" height="4" /><rect x="2" y="8" width="8" height="4" /><path d="M1 0V13" stroke="#29abe2" /></svg>
            <span className="mt-[6px] text-[11.3px] text-[#222] [writing-mode:vertical-rl] whitespace-nowrap">Align and Distribute</span>
          </div>
          <div className="mt-[16px]"><Plus /></div>
          <div className="mt-[24px]"><Chevrons /></div>
        </div>
      </div>
    </div>
  );
}

function Row({ children, cls = "" }: { children: ReactNode; cls?: string }) {
  return <div className={`h-[18px] flex items-center relative shrink-0 ${cls}`}>{children}</div>;
}

function Eye() {
  return (
    <svg width="14" height="10" viewBox="0 0 14 10" fill="none" stroke="#444" className="shrink-0 block">
      <path d="M1 5C4 1 10 1 13 5C10 9 4 9 1 5Z" />
      <circle cx="7" cy="5" r="2" fill="#333" />
    </svg>
  );
}

function Printer({ dark }: { dark?: boolean }) {
  const c = dark ? "#444" : "#c1272d";
  return (
    <svg width="13" height="13" viewBox="0 0 13 13" fill="none" stroke={c} className="shrink-0 block">
      <path d="M4 1H9V5H12V12H1V5H4Z" />
      {!dark && <path d="M1 12L12 5M4 1L9 5" />}
    </svg>
  );
}

function Lock() {
  return (
    <svg width="10" height="13" viewBox="0 0 10 13" className="shrink-0 block">
      <path d="M2 6V3A2 2 0 0 1 6 3V4" fill="none" stroke="#333" />
      <rect x="0" y="6" width="10" height="7" fill="#111" />
    </svg>
  );
}

function Box({ sign }: { sign: "+" | "-" }) {
  return (
    <svg width="9" height="9" viewBox="0 0 9 9" fill="none" stroke="#555" className="shrink-0 block">
      <rect x="0.5" y="0.5" width="8" height="8" />
      <path d={sign === "+" ? "M2.5 4.5H6.5M4.5 2.5V6.5" : "M2.5 4.5H6.5"} />
    </svg>
  );
}

function PageIc() {
  return (
    <svg width="11" height="13" viewBox="0 0 11 13" fill="none" stroke="#666" className="shrink-0 block">
      <path d="M4 1H10V12H1V4Z" />
    </svg>
  );
}

function LayerRow({ swatch, label, lab, dark, children }: { swatch: string; label: string; lab: string; dark?: boolean; children?: ReactNode }) {
  return (
    <Row cls="border-b border-[#dcdcdc]">
      <div className="absolute left-[25px]">{children}</div>
      <div className="absolute left-[43px]"><Eye /></div>
      <div className="absolute left-[59px]"><Printer dark={dark} /></div>
      <div className="absolute left-[76px]"><Lock /></div>
      <div className={`absolute left-[90px] w-[16px] h-[13px] ${swatch}`} />
      <span className={`absolute left-[113px] ${lab} whitespace-nowrap`}>{label}</span>
    </Row>
  );
}

function ObjRow({ stroke, round, label, hw }: { stroke: string; round?: boolean; label: string; hw: string }) {
  return (
    <Row>
      <div className="absolute left-[44px]"><Box sign="+" /></div>
      <div className={`absolute left-[62px] w-[11px] h-[11px] border ${stroke} ${round ? "rounded-full" : ""}`} />
      <span className={`absolute left-[79px] ${hw} h-[18px] bg-[#29abe2] text-white leading-[18px]`}>{label}</span>
    </Row>
  );
}

function Tree() {
  return (
    <div className="ml-[7px] mr-[6px] h-[163px] border border-black flex bg-white overflow-hidden shrink-0">
      <div className="flex-1 min-w-0 flex flex-col text-[11.3px] text-[#222]">
        <Row cls="bg-[#ddeafa] border-b border-[#dcdcdc]">
          <div className="absolute left-[7px]"><Box sign="-" /></div>
          <div className="absolute left-[25px]"><PageIc /></div>
          <span className="absolute left-[41px] font-bold">Page 1</span>
        </Row>
        <LayerRow swatch="bg-[#0000ff]" label="Guides" lab="italic" />
        <LayerRow swatch="bg-[#222]" label="Layer 1" lab="font-bold text-[#c8102e]" dark>
          <Box sign="-" />
        </LayerRow>
        <ObjRow stroke="border-[#d020d0]" label="Rectangle" hw="w-[59px]" />
        <ObjRow stroke="border-[#2a1a9a]" label="Rectangle" hw="w-[59px]" />
        <ObjRow stroke="border-[#55e050]" round label="Ellipse" hw="w-[40px]" />
        <ObjRow stroke="border-[#d02040]" round label="Ellipse" hw="w-[40px]" />
        <Row cls="bg-[#ddeafa] border-b border-[#dcdcdc]">
          <div className="absolute left-[7px]"><Box sign="-" /></div>
          <div className="absolute left-[25px]"><PageIc /></div>
          <span className="absolute left-[41px] font-bold">Master Page</span>
        </Row>
        <LayerRow swatch="bg-[#0000ff]" label="Guides (all pages)" lab="italic text-[#29abe2]" />
      </div>
      <div className="w-[15px] shrink-0 flex flex-col bg-[#f0f0f0]">
        <div className="h-[15px] bg-[#e8e8e8]" />
        <div className="h-[104px] bg-[#d4d0c8] border border-[#f0efea] border-r-[#666] border-b-[#666]" />
        <Dither h="h-[25px]" />
        <div className="flex-1 bg-[#d4d0c8]" />
      </div>
    </div>
  );
}

function LayerAdd({ dim, n }: { dim?: boolean; n?: boolean }) {
  const c = dim ? "#c4c4c4" : "#333";
  return (
    <div className="w-[28px] flex justify-center shrink-0">
      <svg width="18" height="18" viewBox="0 0 18 18" fill="none" stroke={c}>
        {n ? (
          <path d="M1 4H9M1 4V17H7M1 17" />
        ) : (
          <>
            <rect x="1" y="1" width="6" height="7" />
            <rect x="5" y="5" width="6" height="7" />
            <rect x="10" y="10" width="6" height="7" />
          </>
        )}
        <rect x="10" y="0" width="7" height="7" fill={dim ? "#ddd" : "#22a83a"} stroke="none" />
        <path d="M13.5 1.5V5.5M11.5 3.5H15.5" stroke="#fff" />
      </svg>
    </div>
  );
}

function BottomDocker() {
  return (
    <div className="flex-1 min-h-0 flex flex-col">
      <DockHeader title="Object Manager" />
      <div className="flex flex-1 min-h-0">
        <div className="flex-1 min-w-0 bg-[#f3f3f3] flex flex-col">
          <div className="h-[36px] flex items-center pl-[4px] text-[11.3px] text-[#222] shrink-0">
            <div className="w-[28px] flex justify-center">
              <svg width="16" height="18" viewBox="0 0 16 18" fill="none" stroke="#333"><path d="M1 2H5V7H1ZM3 0V9M5 11L7 13L11 9M8 14H15M8 16H15" /></svg>
            </div>
            <div className="w-[28px] flex justify-center">
              <div className="w-[23px] h-[23px] bg-white border border-[#aaa] flex items-center justify-center">
                <svg width="17" height="17" viewBox="0 0 17 17" fill="none" stroke="#333"><path d="M2 2H9V10H2ZM7 10V15H13V9" /><path d="M11 8L16 2" strokeWidth="2" /></svg>
              </div>
            </div>
            <div className="w-[28px] flex justify-center">
              <svg width="17" height="17" viewBox="0 0 17 17" fill="none" stroke="#333"><path d="M2 4H8V11H2ZM6 11V15H13V8" /><ellipse cx="13" cy="4" rx="3.5" ry="2" /></svg>
            </div>
            <div className="ml-[12px] w-[40px] leading-[15px] flex flex-col shrink-0">
              <span>Page 1</span>
              <span>Layer 1</span>
            </div>
            <div className="ml-[97px] flex"><Arrow dir="right" /></div>
          </div>
          <Tree />
          <div className="flex-1 flex items-center pl-[5px] pb-[3px]">
            <LayerAdd n />
            <LayerAdd />
            <LayerAdd />
            <LayerAdd dim />
            <svg width="14" height="16" viewBox="0 0 14 16" className="ml-[107px] shrink-0">
              <path d="M1 2H13V4H1ZM5 0H9V2H5ZM2 5H12V16H2Z" fill="#333" />
              <path d="M5 7V14M9 7V14" stroke="#fff" />
            </svg>
          </div>
        </div>
        <div className="w-[20px] shrink-0 flex flex-col items-center bg-[#ececec] border-l border-[#d8d8d8] ml-px">
          <div className="w-full h-[127px] bg-[#b4b4b4] flex flex-col items-center pt-[3px]">
            <svg width="15" height="14" viewBox="0 0 15 14" fill="none" stroke="#333"><path d="M1 2H6V8H1ZM3.5 0V10M10 8H15M10 10H15M10 12H15" /></svg>
            <span className="mt-[5px] text-[11.3px] text-[#222] [writing-mode:vertical-rl] whitespace-nowrap">Object Manager</span>
          </div>
          <div className="mt-[15px]"><Plus /></div>
        </div>
      </div>
    </div>
  );
}

function Palette() {
  const colors = [
    "bg-[#000000]", "bg-[#1a1a1a]", "bg-[#333333]", "bg-[#4d4d4d]", "bg-[#666666]", "bg-[#808080]", "bg-[#999999]", "bg-[#b3b3b3]",
    "bg-[#cccccc]", "bg-[#e6e6e6]", "bg-[#ffffff]", "bg-[#0000ff]", "bg-[#00ffff]", "bg-[#00ff00]", "bg-[#ffff00]", "bg-[#ff0000]",
    "bg-[#ee00ee]", "bg-[#8a10b8]", "bg-[#f06414]", "bg-[#f47fc0]", "bg-[#6a2a30]", "bg-[#ccc8fa]", "bg-[#9a90f5]", "bg-[#5c90f2]", "bg-[#5c5cf2]",
  ];
  return (
    <div className="w-[24px] shrink-0 flex flex-col items-start pl-px bg-[#f3f3f3]">
      <div className="h-[6px] w-[18px] mt-px bg-[radial-gradient(#bbb_1px,transparent_1px)] bg-[length:3px_3px]" />
      <div className="h-[18px] w-[18px] flex items-center justify-center mt-[3px]"><Arrow dir="right" /></div>
      <div className="h-[19px] w-[18px] flex items-center justify-center">
        <svg width="12" height="12" viewBox="0 0 12 12" stroke="#bbb" strokeWidth="2"><path d="M1 11L10 2" /></svg>
      </div>
      <div className="h-[19px] w-[18px] flex items-center justify-center">
        <svg width="10" height="6" viewBox="0 0 10 6" fill="none" stroke="#c8c8c8" strokeWidth="1.5"><path d="M1 5L5 1L9 5" /></svg>
      </div>
      <svg width="18" height="16" viewBox="0 0 18 16" fill="#fff" stroke="#333" className="shrink-0">
        <rect x="0.5" y="0.5" width="17" height="15" />
        <path d="M0 0L18 16M18 0L0 16" />
      </svg>
      {colors.map((c, i) => (
        <div key={i} className={`w-[18px] h-[17px] shrink-0 ${c} ${i === 16 ? "border border-white" : "border-b border-[#f3f3f3]"}`} />
      ))}
      <div className="w-[18px] h-[7px] bg-[#5c50d0] shrink-0" />
      <div className="h-[16px] w-[18px] flex items-center justify-center">
        <svg width="10" height="6" viewBox="0 0 10 6" fill="none" stroke="#c8c8c8" strokeWidth="1.5"><path d="M1 1L5 5L9 1" /></svg>
      </div>
      <div className="h-[17px] w-[18px] flex items-center justify-center"><Chevrons /></div>
    </div>
  );
}

function Status() {
  return (
    <div className="h-[41px] bg-[#f3f3f3] flex items-center text-[11.3px] text-[#222] shrink-0 pb-[3px]">
      <span className="ml-[250px] w-[166px] shrink-0 whitespace-nowrap">4 Objects Selected on Layer 1</span>
      <span className="w-[90px] shrink-0 whitespace-nowrap">Object Details</span>
      <div className="ml-[238px] w-[16px] flex justify-center shrink-0">
        <svg width="16" height="16" viewBox="0 0 16 16" fill="none"><path d="M8 1L15 8L8 15L1 8Z" stroke="#333" strokeWidth="1.6" /><path d="M16 8V16H8Z" fill="#c8102e" /></svg>
      </div>
      <svg width="22" height="22" viewBox="0 0 22 22" fill="#fff" stroke="#333" className="ml-[2px] shrink-0">
        <rect x="0.5" y="0.5" width="21" height="21" />
        <path d="M0 0L22 22M22 0L0 22" />
      </svg>
      <span className="ml-[12px] w-[40px] shrink-0">None</span>
      <div className="ml-[105px] w-px h-[28px] bg-[#e0e0e0] shrink-0" />
      <div className="ml-[14px] shrink-0"><Pen /></div>
      <svg width="22" height="22" viewBox="0 0 22 22" fill="#fff" className="ml-[4px] shrink-0">
        <rect x="0.5" y="0.5" width="21" height="21" stroke="#999" />
        <path d="M0 0L22 22" stroke="#a0102e" strokeWidth="1.6" />
      </svg>
      <span className="ml-[4px] w-[165px] shrink-0">Outline Color</span>
      <div className="shrink-0"><Pen /></div>
      <div className="ml-[7px] w-[79px] h-[20px] border border-[#c8c8c8] bg-white flex shrink-0">
        <span className="flex-1 pl-[3px] leading-[18px]">16.0 pt</span>
        <div className="w-[18px] bg-[#e4e4e4] flex items-center justify-center"><Down /></div>
      </div>
    </div>
  );
}

export default function App() {
  return (
    <div className="w-[1280px] h-[720px] flex flex-col border border-[#a8a8a8] bg-[#f3f3f3] overflow-hidden font-['Noto_Sans',sans-serif]">
      <Title />
      <Menu />
      <Toolbar />
      <PropBar />
      <div className="flex-1 min-h-0 flex">
        <Toolbox />
        <Document />
        <div className="w-[301px] shrink-0 flex pl-[2px]">
          <div className="flex-1 min-w-0 flex flex-col">
            <TopDocker />
            <div className="h-[5px] bg-white shrink-0" />
            <BottomDocker />
          </div>
          <Palette />
        </div>
      </div>
      <Status />
    </div>
  );
}
